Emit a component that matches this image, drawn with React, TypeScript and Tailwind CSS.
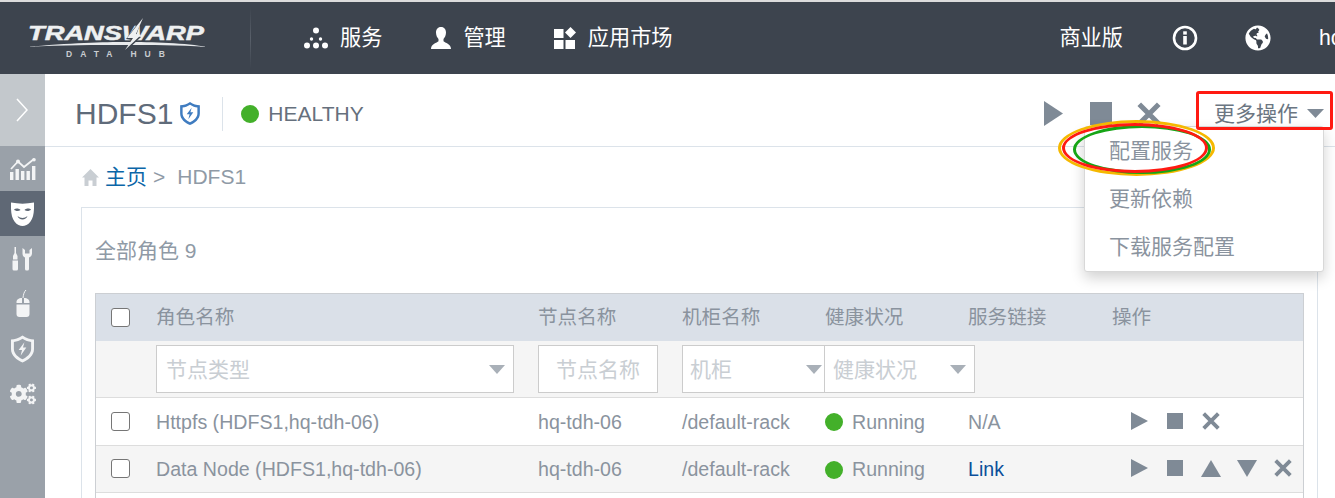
import React from "react";
import { FaCogs, FaGlobeAmericas } from "react-icons/fa";

const font = { fontFamily: '"Liberation Sans","Noto Sans CJK SC",sans-serif' };

function Play({ className }: { className: string }) {
  return (
    <svg viewBox="0 0 16 20" preserveAspectRatio="none" className={className} fill="currentColor">
      <path d="M0 0 16 10 0 20z" />
    </svg>
  );
}
function Stop({ className }: { className: string }) {
  return <div className={`bg-current ${className}`} />;
}
function Cross({ className }: { className: string }) {
  return (
    <svg viewBox="0 0 16 16" className={className} fill="none" stroke="currentColor" strokeWidth="3.4">
      <path d="M1.5 1.5 14.5 14.5M14.5 1.5 1.5 14.5" />
    </svg>
  );
}
function Tri({ down, className }: { down?: boolean; className: string }) {
  return (
    <svg viewBox="0 0 20 18" preserveAspectRatio="none" className={className} fill="currentColor">
      <path d={down ? "M0 0H20L10 18z" : "M10 0 20 18H0z"} />
    </svg>
  );
}
function Caret() {
  return (
    <svg viewBox="0 0 16 9" className="h-[9px] w-[16px] shrink-0 text-[#a9b0b8]" fill="currentColor">
      <path d="M0 0H16L8 9z" />
    </svg>
  );
}
function Check() {
  return <div className="h-[19px] w-[19px] rounded-[3px] border border-[#767676] bg-white" />;
}
function Dot() {
  return <div className="h-[18px] w-[18px] rounded-full bg-[#43b02a]" />;
}

function Logo() {
  return (
    <div className="relative ml-[27px] h-[40px] w-[180px] text-white">
      <div className="absolute left-[1px] top-[5px] origin-left scale-x-[1.3] whitespace-nowrap text-[21px] font-bold italic leading-[20px] text-[#eef0f1] [-webkit-text-stroke:0.5px_#eef0f1]">
        TRANSWARP
      </div>
      <svg viewBox="0 0 180 40" className="absolute inset-0 h-[40px] w-[180px]">
        <path fill="#e8eaec" d="M0 29C40 25 80 24 98 24 125 24 160 25 180 29 150 27 125 27 98 27 70 27 35 27 0 29z" />
        <path fill="#3d444e" d="M113 0 97 21 103 22 96 34 112 19 107 18z" transform="translate(2 0)" />
        <path fill="#eef0f1" d="M116 0 100 20 106 20 98 32 114 17 109 16z" />
      </svg>
      <div className="absolute left-[39px] top-[31px] whitespace-nowrap text-[8.500px] font-bold leading-[10px] tracking-[8px] text-[#c9ccd0]">
        DATA HUB
      </div>
    </div>
  );
}

function NavDots() {
  return (
    <svg viewBox="0 0 24 22" className="h-[22px] w-[24px]" fill="#fff">
      <circle cx="12" cy="3.5" r="3" />
      <circle cx="7.5" cy="12" r="1.7" />
      <circle cx="16.5" cy="12" r="1.7" />
      <circle cx="3" cy="18.5" r="3" />
      <circle cx="12" cy="18.5" r="3" />
      <circle cx="21" cy="18.5" r="3" />
    </svg>
  );
}
function NavUser() {
  return (
    <svg viewBox="0 0 20 22" className="h-[22px] w-[20px]" fill="#fff">
      <path d="M10 0C6.6 0 5 2.6 5 5.6c0 3 1.3 5.2 2.5 6.4v2.2C6 15.8 0 16.6 0 22h20c0-5.4-6-6.2-7.500-7.800V12c1.200-1.200 2.500-3.400 2.500-6.400C15 2.600 13.400 0 10 0z" />
    </svg>
  );
}
function NavApps() {
  return (
    <svg viewBox="0 0 22 22" className="h-[22px] w-[22px]" fill="#fff">
      <rect x="0" y="2" width="9.500" height="9" />
      <rect x="0" y="13" width="9.500" height="9" />
      <rect x="11.500" y="13" width="9.500" height="9" />
      <path d="M16.500 0 22 5.500 16.500 11 11 5.500z" />
    </svg>
  );
}
function Info() {
  return (
    <svg viewBox="0 0 26 26" className="h-[26px] w-[26px]" fill="none">
      <circle cx="13" cy="13" r="11" stroke="#fff" strokeWidth="2.600" />
      <rect x="11.200" y="11" width="3.600" height="8.500" fill="#fff" />
      <rect x="11.200" y="6.300" width="3.600" height="3.300" fill="#fff" />
    </svg>
  );
}
function HomeIcon() {
  return (
    <svg viewBox="0 0 17 17" className="h-[17px] w-[17px]" fill="#c9ced3">
      <path d="M8.500 0 17 8.500H14.500V17H10.500V11.500H6.500V17H2.500V8.500H0z" />
    </svg>
  );
}

function ChartIcon() {
  return (
    <svg viewBox="0 0 26 22" className="h-[22px] w-[26px]" fill="#f3f4f5">
      <rect x="0" y="14" width="3.400" height="8" />
      <rect x="5.500" y="11" width="3.400" height="11" />
      <rect x="11" y="13" width="3.400" height="9" />
      <rect x="16.500" y="13" width="3.400" height="9" />
      <rect x="22" y="8" width="3.400" height="14" />
      <path d="M1 11 8 3.500 14 9 24 1" fill="none" stroke="#f3f4f5" strokeWidth="1.800" />
      <circle cx="8" cy="3.500" r="2" />
      <circle cx="24" cy="1.800" r="1.800" />
    </svg>
  );
}
function MaskIcon() {
  return (
    <svg viewBox="0 0 23 25" className="h-[25px] w-[23px]">
      <path fill="#fff" d="M0 1.500C7.500 3 15.500 3 23 1.500c.3 9-.5 15-3.500 19C17 24 14 25 11.500 25S6 24 3.500 20.500C.5 16.500-.3 10.500 0 1.500z" />
      <path fill="#5f6875" d="M3 8.500c1.500-1.500 5-1.500 6.500.5-2 1.500-5 1.300-6.500-.5zM20 8.500c-1.500-1.500-5-1.500-6.500.5 2 1.500 5 1.300 6.500-.5zM6.500 15c3 2.500 7 2.500 10 0-1.300 4.500-8.700 4.500-10 0z" />
    </svg>
  );
}
function ToolsIcon() {
  return (
    <svg viewBox="0 0 21 24" className="h-[24px] w-[21px]" fill="#f3f4f5">
      <path d="M2.500 0h1.500v6l1.500 3v3.500H1V9l1.500-3zM.5 13.500h5.500V22a1.500 1.500 0 0 1-1.500 1.500h-2.500A1.500 1.500 0 0 1 .5 22z" />
      <path d="M10.500 1v5.500c0 2 1 3.500 2.500 4V22a1.500 1.500 0 0 0 1.500 1.500h1A1.500 1.500 0 0 0 17 22V10.500c1.500-.5 3-2 3-4V1L17.500 3v3.500h-4.500V3z" />
    </svg>
  );
}
function MouseIcon() {
  return (
    <svg viewBox="0 0 16 27" className="h-[27px] w-[16px]" fill="#f3f4f5">
      <path d="M8 8C8.500 4 9 2 11 0" fill="none" stroke="#f3f4f5" strokeWidth="1" />
      <path d="M1.500 13V12c0-2 2-4 5.500-4v5zM9 8c3.500 0 5.500 2 5.500 4v1H9zM1.500 14.500h13V24a3 3 0 0 1-3 3h-7a3 3 0 0 1-3-3z" />
    </svg>
  );
}
function ShieldIcon({ color, className, bolt }: { color: string; className: string; bolt: string }) {
  return (
    <svg viewBox="0 0 24 28" className={className}>
      <path fill={color} d="M12 0C16 3 20 4 24 4v10c0 7-6 11.500-12 14C6 25.500 0 21 0 14V4c4 0 8-1 12-4z" />
      <path fill={bolt} d="M12 3.300C15 5.300 18 6.300 21 6.600V14c0 5-4.500 8.500-9 10.800C7.500 22.500 3 19 3 14V6.600c3-.3 6-1.300 9-3.300z" />
      <path fill={color} d="M14 7 8 15h3.500L10 21l6-8.500h-3.500z" />
    </svg>
  );
}

function Sidebar() {
  const Item = ({ children, active }: { children: React.ReactNode; active?: boolean }) => (
    <div className={`flex h-[45px] items-center justify-center ${active ? "bg-[#5f6875]" : ""}`}>{children}</div>
  );
  return (
    <div className="flex w-[45px] shrink-0 flex-col bg-[#9aa1a9]">
      <div className="flex h-[72px] items-center justify-center bg-[#c3c8cc]">
        <svg viewBox="0 0 12 24" className="mr-[1px] h-[24px] w-[12px]" fill="none" stroke="#fff" strokeWidth="1.500">
          <path d="M1 1 11 12 1 23" />
        </svg>
      </div>
      <Item><ChartIcon /></Item>
      <Item active><MaskIcon /></Item>
      <Item><ToolsIcon /></Item>
      <Item><MouseIcon /></Item>
      <Item><ShieldIcon color="#f3f4f5" bolt="#9aa1a9" className="h-[28px] w-[23px]" /></Item>
      <Item><FaCogs className="h-[24px] w-[26px] text-[#f3f4f5]" /></Item>
    </div>
  );
}

const cols = "grid grid-cols-[60px_382px_144px_143px_143px_144px_1fr] items-center";

function Row({ name, link, even, extra }: { name: string; link: React.ReactNode; even?: boolean; extra?: boolean }) {
  return (
    <div className={`${cols} h-[47.500px] border-b border-[#dddddd] pt-[2px] text-[#8a939e] ${even ? "bg-[#f5f5f5]" : "bg-white"}`}>
      <div className="-mt-[2px] pl-[15px]"><Check /></div>
      <div className="whitespace-nowrap">{name}</div>
      <div>hq-tdh-06</div>
      <div>/default-rack</div>
      <div className="flex items-center gap-[9px]"><Dot /><span>Running</span></div>
      <div>{link}</div>
      <div className="-mt-[3px] flex items-center pl-[19px] text-[#7f8a96]">
        <Play className="h-[18px] w-[17px]" />
        <Stop className="ml-[19px] h-[16px] w-[16px]" />
        {extra ? (
          <>
            <Tri className="ml-[18px] h-[17px] w-[20px]" />
            <Tri down className="ml-[16px] h-[17px] w-[20px]" />
            <Cross className="ml-[17px] h-[18px] w-[18px]" />
          </>
        ) : (
          <Cross className="ml-[19px] h-[18px] w-[18px]" />
        )}
      </div>
    </div>
  );
}

function Filter({ label, className }: { label: string; className: string }) {
  return (
    <div className={`flex h-[48px] items-center justify-between border border-[#cccccc] bg-white text-[21px] text-[#c9ced3] ${className}`}>
      <span className="whitespace-nowrap pt-[2px]">{label}</span>
      <Caret />
    </div>
  );
}

export default function App() {
  return (
    <div className="flex h-screen w-full flex-col overflow-hidden bg-white text-[19.600px]" style={font}>
      <header className="flex h-[74px] shrink-0 items-center border-t-2 border-[#dcdcdc] bg-[#3d444e] text-[21.200px] text-white">
        <Logo />
        <div className="ml-[43px] h-[62px] w-px bg-gradient-to-b from-[#3d444e] via-[#59606a] to-[#3d444e]" />
        <div className="ml-[53px] flex items-center gap-[12px]"><NavDots /><span>服务</span></div>
        <div className="ml-[49px] flex items-center gap-[12px]"><NavUser /><span>管理</span></div>
        <div className="ml-[48px] flex items-center gap-[12px]"><NavApps /><span>应用市场</span></div>
        <div className="ml-auto flex items-center">
          <span>商业版</span>
          <div className="ml-[49px]"><Info /></div>
          <FaGlobeAmericas className="ml-[47px] h-[26px] w-[26px] text-white" />
          <div className="ml-[48px] w-[16px] overflow-hidden">ho</div>
        </div>
      </header>

      <div className="flex min-h-0 flex-1">
        <Sidebar />
        <main className="relative min-w-0 flex-1">
          <div className="flex h-[73px] items-center border-b border-[#dce3ea] pt-[7px]">
            <span className="ml-[30px] text-[30px] text-[#5f6b7a]">HDFS1</span>
            <ShieldIcon color="#3f7cc0" bolt="#ffffff" className="ml-[7px] h-[23px] w-[20px]" />
            <div className="ml-[22px] h-[34px] w-px bg-[#dce3ea]" />
            <div className="ml-[18px]"><Dot /></div>
            <span className="ml-[9px] text-[21px] text-[#66707d]">HEALTHY</span>
            <div className="ml-auto flex items-center text-[#7f8a96]">
              <Play className="h-[25px] w-[19px]" />
              <Stop className="ml-[27px] h-[23px] w-[22px]" />
              <Cross className="ml-[25px] h-[24px] w-[24px]" />
              <span className="ml-[53px] text-[21px] text-[#6b7682]">更多操作</span>
              <svg viewBox="0 0 16 9" className="ml-[9px] mr-[11px] h-[9px] w-[17px] text-[#7f8a96]" fill="currentColor" preserveAspectRatio="none">
                <path d="M0 0H16L8 9z" />
              </svg>
            </div>
          </div>

          <div className="flex h-[60px] items-center pl-[37px] text-[21px]">
            <HomeIcon />
            <span className="ml-[6px] text-[#0b66a8]">主页</span>
            <span className="ml-[6px] text-[#8f9aa6]">&gt;</span>
            <span className="ml-[12px] text-[#8f9aa6]">HDFS1</span>
          </div>

          <div className="ml-[36px] mr-[17px] h-[400px] border border-[#dce3ea] px-[13px]">
            <div className="flex h-[85px] items-center text-[21px] text-[#8f9aa6]">全部角色 9</div>
            <div className="border border-[#cccfd3]">
              <div className={`${cols} h-[47px] bg-[#dae0e8] text-[#8a939e]`}>
                <div className="pl-[15px]"><Check /></div>
                <div>角色名称</div>
                <div>节点名称</div>
                <div>机柜名称</div>
                <div>健康状况</div>
                <div>服务链接</div>
                <div>操作</div>
              </div>
              <div className={`${cols} h-[57px] border-b border-[#dddddd] bg-[#f5f5f5]`}>
                <div />
                <Filter label="节点类型" className="mr-[24px] pl-[9px] pr-[8px]" />
                <div className="mr-[24px] flex h-[48px] items-center justify-center whitespace-nowrap border border-[#cccccc] bg-white pt-[2px] text-[21px] text-[#c9ced3]">节点名称</div>
                <Filter label="机柜" className="pl-[7px] pr-[2px]" />
                <Filter label="健康状况" className="-ml-[1px] -mr-[7px] pl-[8px] pr-[8px]" />
                <div />
                <div />
              </div>
              <Row name="Httpfs (HDFS1,hq-tdh-06)" link="N/A" />
              <Row name="Data Node (HDFS1,hq-tdh-06)" even extra link={<span className="text-[#0b4f9a]">Link</span>} />
              <div className="h-[48px]" />
            </div>
          </div>

          <div className="absolute left-[1039px] top-[52px] w-[240px] rounded-[3px] border border-[#d8d8d8] bg-white text-[21px] text-[#8a939e] shadow-[0_6px_14px_rgba(0,0,0,0.18)]">
            <div className="flex h-[48px] items-center pl-[24px]">配置服务</div>
            <div className="flex h-[48px] items-center pl-[24px]">更新依赖</div>
            <div className="flex h-[48px] items-center pl-[24px]">下载服务配置</div>
          </div>
          <div className="absolute left-[1151px] top-[17px] h-[39px] w-[137px] rounded-[3px] border-[3px] border-[#ff1a12]" />
          <div className="absolute left-[1013px] top-[46px] h-[56px] w-[157px] rounded-[50%] border-[3px] border-[#f5b800]" />
          <div className="absolute left-[1028px] top-[51px] h-[49px] w-[138px] rounded-[50%] border-[3px] border-[#16a516]" />
          <div className="absolute left-[1017px] top-[49px] h-[50px] w-[146px] rounded-[50%] border-[3px] border-[#ff1a12]" />
        </main>
      </div>
    </div>
  );
}
